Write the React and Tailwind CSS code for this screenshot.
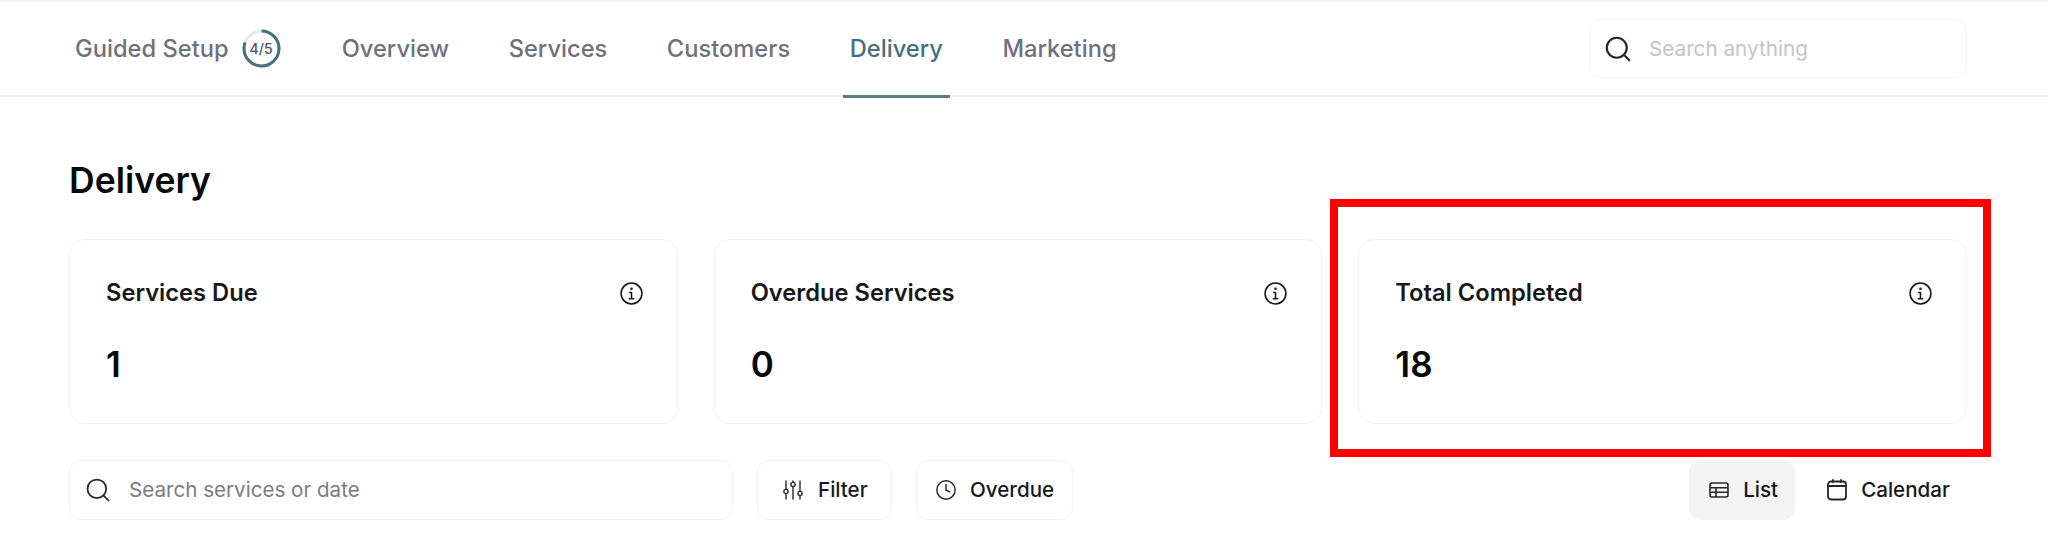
import { Search, Clock } from "lucide-react"

const tabs = ["Overview", "Services", "Customers", "Delivery", "Marketing"]

const cards = [
  { title: "Services Due", value: "1" },
  { title: "Overdue Services", value: "0" },
  { title: "Total Completed", value: "18" },
]

function InfoIcon() {
  return (
    <svg width="25" height="25" viewBox="0 0 24 24" fill="none" stroke="#18181b" strokeWidth="1.5" strokeLinecap="round" strokeLinejoin="round">
      <circle cx="12" cy="12" r="10" />
      <path d="M10.2 11h1.8v6M10 17h4" />
      <circle cx="12" cy="7.4" r="0.5" fill="#18181b" />
    </svg>
  )
}

function FilterIcon() {
  return (
    <svg width="22" height="22" viewBox="0 0 22 22" fill="none" stroke="#27272a" strokeWidth="1.4" strokeLinecap="round">
      <path d="M4 2v8M4 15v5M11 2v1M11 8v12M18 2v10M18 17v3" />
      <circle cx="4" cy="12.5" r="2.1" />
      <circle cx="11" cy="5.5" r="2.1" />
      <circle cx="18" cy="14.5" r="2.1" />
    </svg>
  )
}

function ListIcon() {
  return (
    <svg width="20" height="18" viewBox="0 0 20 18" fill="none" stroke="#27272a" strokeWidth="1.6">
      <rect x="1" y="2" width="18" height="14" rx="2" />
      <path d="M1 6.7h18M1 11.3h18M7 6.7V16" />
    </svg>
  )
}

function CalendarIcon() {
  return (
    <svg width="20" height="22" viewBox="0 0 20 22" fill="none" stroke="#27272a" strokeWidth="1.8" strokeLinecap="round">
      <rect x="1" y="2.5" width="18" height="18" rx="3" />
      <path d="M1 7h18M6 1v2M14 1v2" />
    </svg>
  )
}

function Ring() {
  return (
    <div className="relative flex h-[39px] w-[39px] items-center justify-center">
      <svg width="39" height="39" viewBox="0 0 39 39" className="absolute inset-0 -rotate-90">
        <circle cx="19.5" cy="19.5" r="17.5" fill="none" stroke="#e5e7eb" strokeWidth="3" />
        <circle cx="19.5" cy="19.5" r="17.5" fill="none" stroke="#44727a" strokeWidth="3" strokeDasharray="88 110" />
      </svg>
      <span className="text-[14px] font-medium text-[#52525b]">4/5</span>
    </div>
  )
}

export default function App() {
  return (
    <div className="relative h-[555px] w-[2048px] overflow-hidden bg-white font-['Inter',sans-serif]">

      {/* Top bar */}
      <header className="flex h-[97px] items-stretch justify-between border-t-2 border-b-2 border-[#f1f1f3] pr-[81px] pl-[75px]">
        <nav className="flex items-stretch">
          <div className="mr-[54px] flex items-center gap-[13px] text-[23.7px] font-medium text-[#71717a]">
            Guided Setup
            <Ring />
          </div>
          <div className="flex items-stretch gap-[45.5px]">
            {tabs.map((tab) => (
              <div
                key={tab}
                className={
                  tab === "Delivery"
                    ? "-mb-[3px] flex items-center border-b-[3px] border-[#55808a] px-[7px] text-[23.7px] font-medium text-[#44727a]"
                    : "-mb-[3px] flex items-center border-b-[3px] border-transparent px-[7px] text-[23.7px] font-medium text-[#71717a]"
                }
              >
                {tab}
              </div>
            ))}
          </div>
        </nav>
        <div className="flex items-center">
          <div className="flex h-[59px] w-[378px] items-center gap-[16px] rounded-[12px] border border-[#f4f4f5] pl-[13px]">
            <Search size={30} strokeWidth={1.7} color="#27272a" />
            <span className="text-[20.7px] text-[#c4c4c8]">Search anything</span>
          </div>
        </div>
      </header>

      <main className="px-[69px] pr-[81px]">
        <h1 className="mt-[61px] text-[35.5px] leading-[46px] font-semibold text-[#09090b]">Delivery</h1>

        {/* Stat cards */}
        <div className="mt-[35px] grid grid-cols-3 gap-[36px]">
          {cards.map((card) => (
            <div key={card.title} className="h-[185px] rounded-[16px] border border-[#f1f1f3] pt-[39px] pr-[33px] pl-[36px]">
              <div className="flex items-center justify-between">
                <span className="text-[23.7px] leading-[28px] font-semibold text-[#18181b]">{card.title}</span>
                <InfoIcon />
              </div>
              <div className="mt-[35px] text-[35px] leading-[44px] font-semibold text-[#09090b]">{card.value}</div>
            </div>
          ))}
        </div>

        {/* Toolbar */}
        <div className="mt-[36px] flex items-center justify-between">
          <div className="flex gap-6">
            <div className="flex h-[60px] w-[664px] items-center gap-[17px] rounded-[12px] border border-[#f1f1f3] pl-[14px]">
              <Search size={28} strokeWidth={1.5} color="#27272a" />
              <span className="text-[20.6px] text-[#7b7b85]">Search services or date</span>
            </div>
            <div className="flex h-[60px] w-[135px] items-center gap-[14px] rounded-[12px] border border-[#f1f1f3] pl-[24px] text-[20.6px] font-medium text-[#18181b]">
              <FilterIcon />
              Filter
            </div>
            <div className="flex h-[60px] w-[157px] items-center gap-[13px] rounded-[12px] border border-[#f1f1f3] pl-[18px] text-[20.6px] font-medium text-[#18181b]">
              <Clock size={22} strokeWidth={1.6} color="#27272a" />
              Overdue
            </div>
          </div>
          <div className="flex gap-[12px]">
            <div className="flex h-[60px] w-[106px] items-center gap-[14px] rounded-[12px] bg-[#f4f4f5] pl-[20px] text-[20.6px] font-medium text-[#18181b]">
              <ListIcon />
              List
            </div>
            <div className="flex h-[60px] items-center gap-[14px] rounded-[12px] pr-[17px] pl-[20px] text-[20.6px] font-medium text-[#18181b]">
              <CalendarIcon />
              Calendar
            </div>
          </div>
        </div>
      </main>

      {/* Highlight box */}
      <div className="absolute top-[199px] left-[1330px] h-[258px] w-[661px] border-[8px] border-[#ff0000]" />
    </div>
  )
}
